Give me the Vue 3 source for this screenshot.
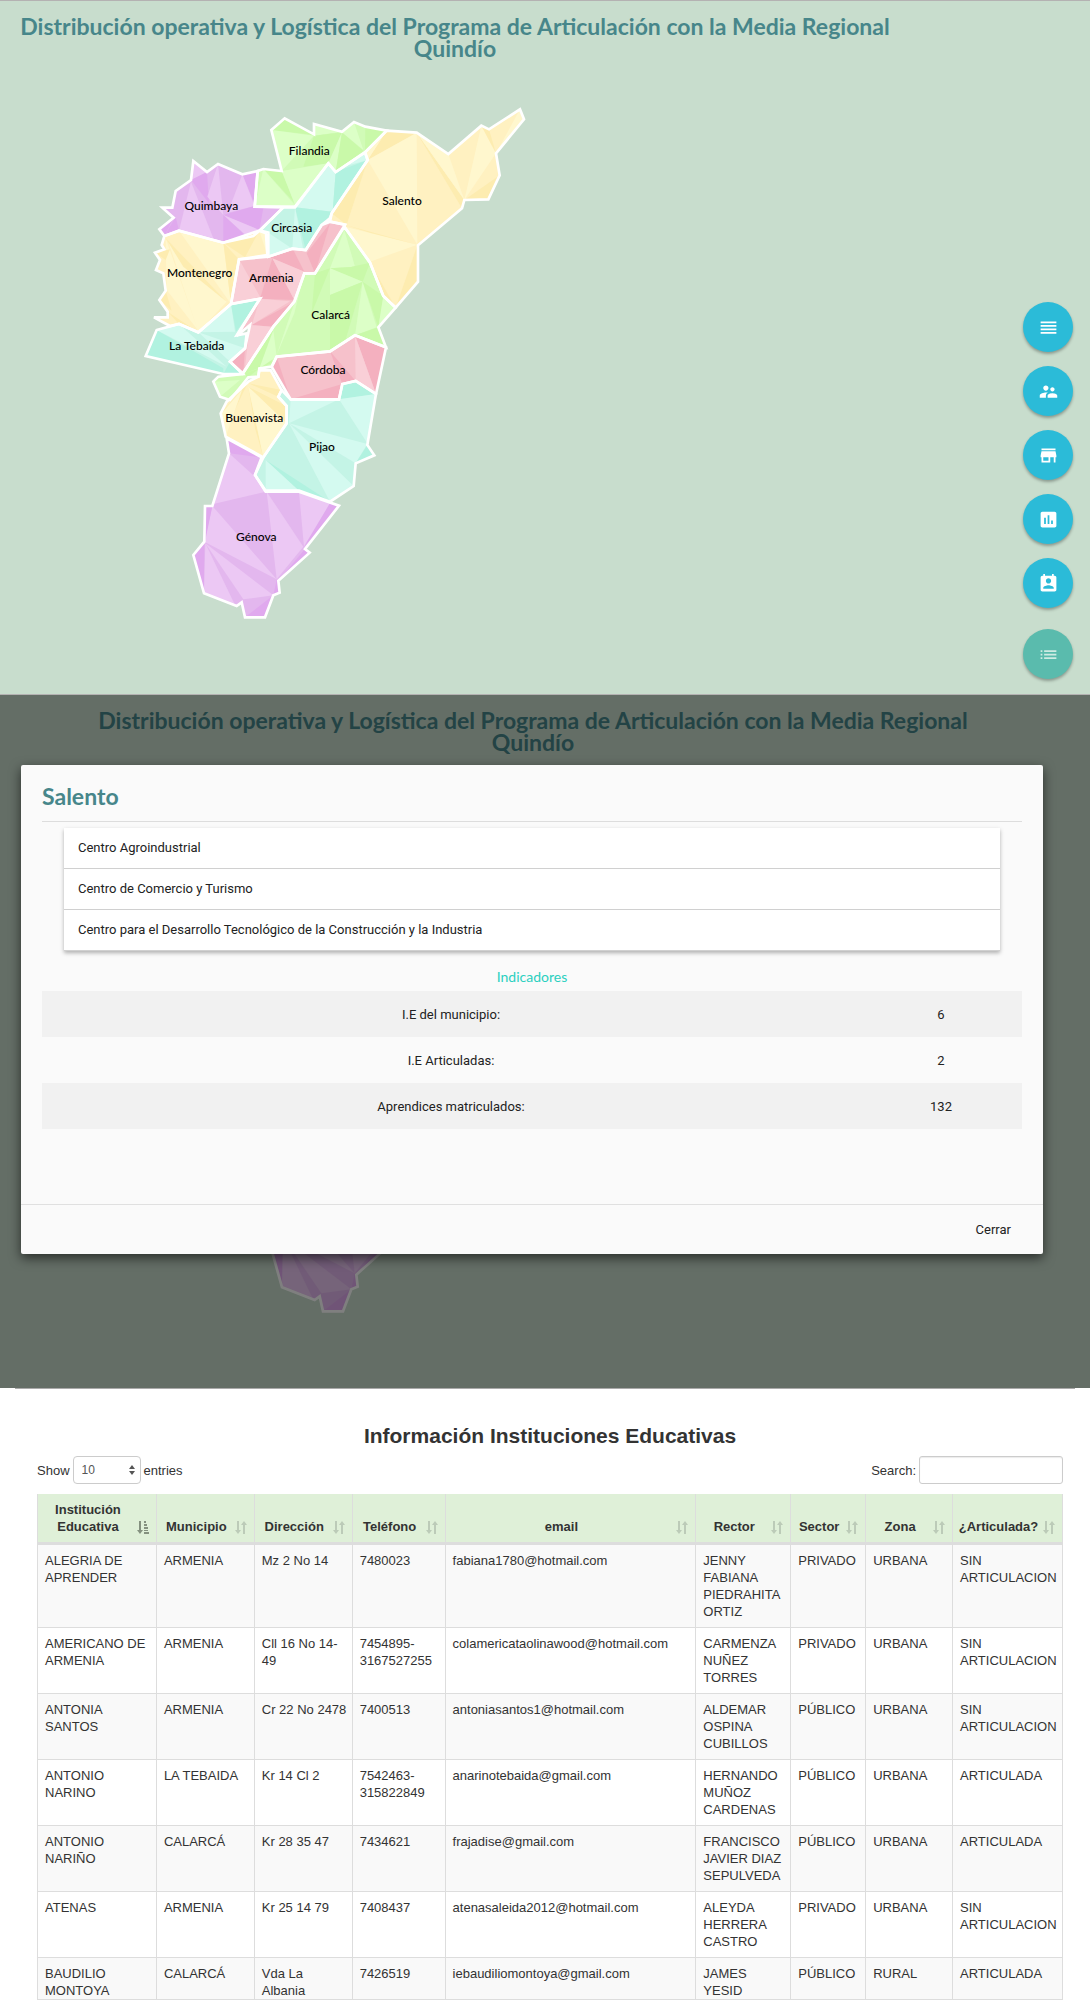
<script setup>
import { ref } from 'vue'

const title = 'Distribución operativa y Logística del Programa de Articulación con la Media Regional Quindío'

// Each municipality: outline, label anchor and shaded facets (l = light, d = dark, m = middle tone).
const regions = [
  {
    name: 'Quimbaya', tone: 'purple', x: 244, y: 330,
    outline: '190,183 231,216 264,192 337,223 383,213 374,320 460,322 388,392 370,408 280,428 147,392 103,408 88,388 131,353 97,323 127,323 137,273 183,240',
    facets: [
      ['l', '190,183 231,216 183,240'], ['d', '183,240 231,216 237,310'], ['l', '264,192 280,345 232,290'],
      ['l', '183,245 250,415 147,392'], ['d', '337,223 383,213 374,312'], ['l', '337,223 374,318 293,338'],
      ['d', '280,345 374,318 410,325 388,390'], ['l', '280,345 388,390 350,408'], ['d', '280,345 350,410 280,428'],
      ['d', '103,408 137,350 147,392'], ['d', '88,388 131,353 103,408'], ['m', '460,322 400,325 388,390'],
    ],
  },
  {
    name: 'Filandia', tone: 'green', x: 538, y: 165,
    outline: '424,90 464,55 552,103 552,72 636,95 672,66 706,80 770,92 705,157 617,216 595,190 495,320 374,320 383,213 400,207 455,213',
    facets: [
      ['d', '424,90 464,55 552,105'], ['l', '424,90 552,107 455,213'], ['l', '552,72 636,95 552,107'],
      ['d', '552,107 636,97 595,190 520,200'], ['l', '636,97 617,216 595,190'], ['d', '636,97 700,152 617,216'],
      ['l', '672,66 700,150 636,97'], ['d', '706,80 770,92 705,157'], ['d', '400,207 455,213 495,310'],
      ['l', '400,207 495,315 374,320'], ['l', '455,213 595,190 495,315'],
    ],
  },
  {
    name: 'Circasia', tone: 'teal', x: 485, y: 397,
    outline: '595,190 617,216 705,157 713,180 605,340 600,355 575,375 527,450 487,446 415,470 415,398 390,392 460,322 495,322',
    facets: [
      ['l', '595,190 617,216 608,335 495,322'], ['d', '617,216 713,180 608,335'], ['l', '705,157 713,180 640,200'],
      ['d', '495,322 605,335 560,410'], ['l', '415,398 487,446 415,470'], ['d', '495,322 560,400 527,450'], ['l', '495,322 520,450 487,446'],
    ],
  },
  {
    name: 'Salento', tone: 'yellow', x: 816, y: 315,
    outline: '770,92 860,98 955,162 1054,77 1077,88 1170,28 1182,58 1098,160 1109,226 1075,298 1003,300 996,325 864,436 864,545 797,623 760,588 720,488 643,380 645,374 600,365 605,340 713,180 705,157',
    facets: [
      ['d', '770,92 860,98 713,180'], ['l', '860,98 862,434 713,180'], ['d', '713,180 650,374 605,340'],
      ['l', '770,92 713,180 705,157'], ['l', '645,380 862,434 720,485'], ['d', '645,374 862,434 720,398'],
      ['d', '860,98 1003,300 996,325'], ['l', '860,98 955,162 1003,300'], ['l', '1054,77 1098,160 1003,300'],
      ['d', '1054,77 1077,88 1098,160'], ['d', '1109,226 1075,298 1003,300'], ['l', '1170,28 1182,58 1098,160'],
      ['d', '862,436 864,545 797,623'], ['d', '720,488 797,623 760,588'],
    ],
  },
  {
    name: 'Montenegro', tone: 'yellow', x: 209, y: 532,
    outline: '147,392 280,428 388,392 408,400 412,465 327,478 303,612 205,697 147,672 120,678 72,652 113,652 113,635 88,600 107,572 100,520 78,510 90,480 75,458 103,448 95,435 103,408',
    facets: [
      ['l', '147,392 280,428 303,612'], ['d', '280,428 327,478 303,612'], ['d', '280,428 388,392 345,472'],
      ['l', '107,415 205,692 110,570'], ['l', '115,425 290,605 205,697'], ['d', '107,415 160,500 290,605'],
      ['d', '107,572 125,632 88,600'], ['d', '113,635 205,697 147,672'], ['d', '75,458 120,448 107,480'], ['l', '388,392 408,400 412,465'],
    ],
  },
  {
    name: 'La Tebaida', tone: 'teal', x: 200, y: 750,
    outline: '80,690 147,672 205,697 303,612 390,596 320,706 350,700 345,745 300,785 338,822 280,822 47,768',
    facets: [
      ['d', '80,690 280,805 280,822 47,768'], ['l', '80,690 147,672 290,800'], ['l', '205,697 303,612 315,695'],
      ['d', '303,612 390,596 318,695'], ['l', '205,697 345,745 300,785'], ['d', '300,785 338,822 280,822'],
    ],
  },
  {
    name: 'Calarcá', tone: 'green', x: 602, y: 657,
    outline: '643,380 720,488 760,588 797,623 745,682 768,742 675,706 600,754 440,770 425,800 388,805 385,830 355,832 300,900 270,890 250,845 265,830 338,822 430,680 493,605 523,520 555,520',
    facets: [
      ['l', '643,390 675,500 600,505'], ['d', '600,505 675,500 698,545'], ['d', '555,520 600,505 545,640'],
      ['l', '600,505 698,545 600,585'], ['d', '600,585 698,545 645,725 600,754'], ['l', '698,545 740,682 675,706'],
      ['d', '698,545 760,588 745,682'], ['l', '760,588 797,623 745,682'], ['d', '745,682 768,742 675,706'],
      ['d', '665,500 720,488 698,545'], ['l', '523,520 493,640 440,765'], ['d', '430,690 425,790 338,822'],
      ['l', '430,690 440,770 388,805'], ['l', '250,845 330,840 270,890'], ['d', '338,822 388,805 355,832'],
    ],
  },
  {
    name: 'Armenia', tone: 'red', x: 424, y: 546,
    outline: '600,365 645,374 555,520 523,520 493,605 430,680 338,820 300,785 345,745 360,675 320,708 390,596 303,612 327,478 415,470 487,446 527,450 575,375',
    facets: [
      ['d', '600,370 530,460 555,520'], ['d', '415,470 490,450 523,515'], ['d', '427,475 493,600 390,596'],
      ['l', '427,475 523,515 493,600'], ['l', '327,478 390,590 303,612'], ['d', '493,605 365,675 430,680'],
      ['l', '390,596 480,604 365,675'], ['l', '360,675 425,680 345,800'], ['d', '345,745 340,820 300,785'], ['d', '345,680 360,675 320,708'],
    ],
  },
  {
    name: 'Córdoba', tone: 'red', x: 579, y: 821,
    outline: '440,770 600,754 675,706 768,742 738,882 677,843 637,852 627,898 482,898 425,800',
    facets: [
      ['d', '440,770 482,898 425,800'], ['d', '482,898 637,852 627,898'], ['d', '600,754 677,843 637,852'],
      ['d', '675,706 768,742 738,882'], ['l', '675,706 738,882 677,843'],
    ],
  },
  {
    name: 'Buenavista', tone: 'yellow', x: 373, y: 967,
    outline: '388,811 422,811 455,870 445,890 470,918 470,970 400,1072 287,1010 272,940 290,905 355,845 385,830',
    facets: [
      ['d', '337,868 355,845 300,960 272,940'], ['d', '355,860 400,1072 375,985'], ['l', '355,860 470,918 470,970 400,1072'],
      ['d', '355,850 455,870 445,890'], ['l', '337,868 287,1010 275,940'], ['d', '355,860 470,970 470,918'],
    ],
  },
  {
    name: 'Pijao', tone: 'teal', x: 576, y: 1053,
    outline: '627,898 637,852 677,843 738,882 712,1035 733,1066 677,1090 671,1158 600,1205 507,1172 407,1172 375,1125 400,1072 470,970 470,918 445,890 455,870 482,898',
    facets: [
      ['l', '482,900 627,898 477,970'], ['d', '637,852 677,843 738,882 627,898'], ['l', '627,898 738,882 712,1030'],
      ['l', '477,970 712,1032 677,1090'], ['l', '477,970 671,1158 600,1205'], ['d', '407,1080 600,1205 507,1172'],
      ['l', '407,1080 507,1172 407,1172'], ['d', '712,1035 733,1066 677,1090'],
    ],
  },
  {
    name: 'Génova', tone: 'purple', x: 379, y: 1324,
    outline: '290,1015 395,1072 375,1125 407,1175 507,1175 627,1217 525,1347 539,1358 445,1442 449,1478 430,1486 405,1552 345,1552 335,1507 320,1518 222,1480 190,1365 223,1325 225,1218 247,1218 297,1060',
    facets: [
      ['d', '290,1015 395,1072 297,1060'], ['l', '297,1060 375,1130 407,1175 250,1212'], ['l', '247,1218 440,1438 223,1325'],
      ['l', '410,1175 520,1340 440,1438'], ['l', '507,1175 600,1210 522,1340'], ['d', '600,1210 627,1217 522,1340'],
      ['d', '225,1218 247,1218 225,1325'], ['d', '223,1330 222,1480 190,1365'], ['l', '226,1330 315,1515 222,1480'],
      ['l', '226,1330 430,1486 340,1498'], ['d', '440,1440 449,1478 430,1486'], ['d', '525,1347 539,1358 445,1442'],
      ['d', '430,1486 405,1552 345,1552'],
    ],
  },
]

const actions = [
  { label: 'Listado', d: 'M3 15h18v-2H3v2zm0 4h18v-2H3v2zm0-8h18V9H3v2zm0-6v2h18V5H3z' },
  { label: 'Usuarios', d: 'M16.5 12c1.38 0 2.49-1.12 2.49-2.5S17.88 7 16.5 7C15.12 7 14 8.12 14 9.5s1.12 2.5 2.5 2.5zM9 11c1.66 0 2.99-1.34 2.99-3S10.66 5 9 5C7.34 5 6 6.34 6 8s1.34 3 3 3zm7.5 3c-1.83 0-5.5.92-5.5 2.75V19h11v-2.25c0-1.83-3.67-2.75-5.5-2.75zM9 13c-2.33 0-7 1.17-7 3.5V19h7v-2.25c0-.85.33-2.34 2.37-3.47C10.5 13.1 9.66 13 9 13z' },
  { label: 'Centros', d: 'M20 4H4v2h16V4zm1 10v-2l-1-5H4l-1 5v2h1v6h10v-6h4v6h2v-6h1zm-9 4H6v-4h6v4z' },
  { label: 'Indicadores', d: 'M19 3H5c-1.1 0-2 .9-2 2v14c0 1.1.9 2 2 2h14c1.1 0 2-.9 2-2V5c0-1.1-.9-2-2-2zM9 17H7v-7h2v7zm4 0h-2V7h2v10zm4 0h-2v-4h2v4z' },
  { label: 'Contactos', d: 'M19 3h-1V1h-2v2H8V1H6v2H5c-1.11 0-2 .9-2 2v14c0 1.1.89 2 2 2h14c1.1 0 2-.9 2-2V5c0-1.1-.9-2-2-2zm-7 3c1.66 0 3 1.34 3 3s-1.34 3-3 3-3-1.34-3-3 1.34-3 3-3zm6 12H6v-1c0-2 4-3.1 6-3.1s6 1.1 6 3.1v1z' },
  { label: 'Menú', d: 'M3 13h2v-2H3v2zm0 4h2v-2H3v2zm0-8h2V7H3v2zm4 4h14v-2H7v2zm0 4h14v-2H7v2zM7 7v2h14V7H7z' },
]

const centers = [
  'Centro Agroindustrial',
  'Centro de Comercio y Turismo',
  'Centro para el Desarrollo Tecnológico de la Construcción y la Industria',
]

const indicators = [
  ['I.E del municipio:', 6],
  ['I.E Articuladas:', 2],
  ['Aprendices matriculados:', 132],
]

const columns = [
  ['Institución Educativa', 119], ['Municipio', 98], ['Dirección', 98], ['Teléfono', 93], ['email', 251],
  ['Rector', 95], ['Sector', 75], ['Zona', 87], ['¿Articulada?', 110],
]

const rows = [
  ['ALEGRIA DE APRENDER', 'ARMENIA', 'Mz 2 No 14', '7480023', 'fabiana1780@hotmail.com', 'JENNY FABIANA PIEDRAHITA ORTIZ', 'PRIVADO', 'URBANA', 'SIN ARTICULACION'],
  ['AMERICANO DE ARMENIA', 'ARMENIA', 'Cll 16 No 14-49', '7454895-3167527255', 'colamericataolinawood@hotmail.com', 'CARMENZA NUÑEZ TORRES', 'PRIVADO', 'URBANA', 'SIN ARTICULACION'],
  ['ANTONIA SANTOS', 'ARMENIA', 'Cr 22 No 2478', '7400513', 'antoniasantos1@hotmail.com', 'ALDEMAR OSPINA CUBILLOS', 'PÚBLICO', 'URBANA', 'SIN ARTICULACION'],
  ['ANTONIO NARINO', 'LA TEBAIDA', 'Kr 14 Cl 2', '7542463-315822849', 'anarinotebaida@gmail.com', 'HERNANDO MUÑOZ CARDENAS', 'PÚBLICO', 'URBANA', 'ARTICULADA'],
  ['ANTONIO NARIÑO', 'CALARCÁ', 'Kr 28 35 47', '7434621', 'frajadise@gmail.com', 'FRANCISCO JAVIER DIAZ SEPULVEDA', 'PÚBLICO', 'URBANA', 'ARTICULADA'],
  ['ATENAS', 'ARMENIA', 'Kr 25 14 79', '7408437', 'atenasaleida2012@hotmail.com', 'ALEYDA HERRERA CASTRO', 'PRIVADO', 'URBANA', 'SIN ARTICULACION'],
  ['BAUDILIO MONTOYA', 'CALARCÁ', 'Vda La Albania', '7426519', 'iebaudiliomontoya@gmail.com', 'JAMES YESID', 'PÚBLICO', 'RURAL', 'ARTICULADA'],
]

const pageSize = ref('10')
const query = ref('')
</script>

<template>
  <main class="page">
    <section class="panel with-actions">
      <div class="stage">
        <h1 class="title">{{ title }}</h1>
        <svg class="map" viewBox="0 0 1950 1590" role="img" aria-label="Mapa del Quindío">
          <g id="quindio">
            <g v-for="r in regions" :key="r.name" :class="r.tone">
              <polygon class="m" :points="r.outline" />
              <polygon v-for="(f, i) in r.facets" :key="i" :class="f[0]" :points="f[1]" />
            </g>
            <polygon v-for="r in regions" :key="r.name" class="border" :points="r.outline" />
            <text v-for="r in regions" :key="r.name" class="place" :x="r.x" :y="r.y">{{ r.name }}</text>
          </g>
        </svg>
      </div>
      <nav class="actions" aria-label="Acciones">
        <button v-for="a in actions" :key="a.label" type="button" class="fab" :aria-label="a.label">
          <svg viewBox="0 0 24 24" aria-hidden="true"><path :d="a.d" /></svg>
        </button>
      </nav>
    </section>

    <section class="panel dimmed">
      <div class="stage">
        <h2 class="title">{{ title }}</h2>
        <svg class="map" viewBox="0 0 1950 1590" aria-hidden="true"><use href="#quindio" /></svg>
      </div>
      <div class="backdrop">
        <div class="modal" role="dialog" aria-labelledby="modal-title">
          <div class="modal-body">
            <h3 id="modal-title" class="modal-title">Salento</h3>
            <ul class="centers">
              <li v-for="c in centers" :key="c">{{ c }}</li>
            </ul>
            <table class="indicators">
              <caption>Indicadores</caption>
              <tbody>
                <tr v-for="i in indicators" :key="i[0]">
                  <th scope="row">{{ i[0] }}</th>
                  <td>{{ i[1] }}</td>
                </tr>
              </tbody>
            </table>
          </div>
          <footer class="modal-footer">
            <button type="button" class="close">Cerrar</button>
          </footer>
        </div>
      </div>
    </section>

    <section class="listing">
      <h2 class="listing-title">Información Instituciones Educativas</h2>
      <div class="tools">
        <label class="tool">Show
          <span class="select-box">
            <select v-model="pageSize">
              <option>10</option>
              <option>25</option>
              <option>50</option>
            </select>
            <svg viewBox="0 0 6 10" aria-hidden="true"><path d="M0 4L3 0l3 4zM0 6h6l-3 4z" /></svg>
          </span>
          entries
        </label>
        <label class="tool">Search: <input v-model="query" class="search" type="search" /></label>
      </div>
      <table class="schools">
        <colgroup>
          <col v-for="c in columns" :key="c[0]" :style="{ width: (c[1] / 1026) * 100 + '%' }" />
        </colgroup>
        <thead>
          <tr>
            <th v-for="(c, i) in columns" :key="c[0]" scope="col">
              <span class="head">
                <span class="head-text">{{ c[0] }}</span>
                <svg class="sort" :class="{ active: i === 0 }" viewBox="0 0 12 13" aria-hidden="true">
                  <path v-if="i === 0" d="M2 0h2v9h2l-3 4-3-4h2zM7 0h2v2H7zM7 3h3v2H7zM7 6h4v2H7zM7 9h4v1H7zM7 11h5v2H7z" />
                  <path v-else d="M2 0h2v9h2l-3 4-3-4h2zM8 13h2V4h2L9 0 6 4h2z" />
                </svg>
              </span>
            </th>
          </tr>
        </thead>
        <tbody>
          <tr v-for="r in rows" :key="r[0]">
            <td v-for="(cell, i) in r" :key="i">{{ cell }}</td>
          </tr>
        </tbody>
      </table>
    </section>
  </main>
</template>

<style>
body {
  margin: 0;
  background: #fff;
}
</style>

<style scoped>
.page {
  font-family: Roboto, sans-serif;
  font-size: 13px;
  color: #222;
}

.panel {
  position: relative;
  background: #c8ddcd;
  border-top: 1px solid #b4b2b2;
}

.with-actions {
  display: grid;
  grid-template-columns: 1fr 180px;
}

.stage {
  padding: 14px 20px 64px;
  text-align: center;
}

.dimmed .stage {
  padding-right: 44px;
}

.title {
  max-width: 880px;
  margin: 0 auto 41px;
  font: 700 23px/22px Lato, sans-serif;
  color: #47868a;
}

.map {
  display: block;
  width: 650px;
  max-width: 100%;
  margin: 0 auto;
}

.border {
  fill: none;
  stroke: #fff;
  stroke-width: 8;
}

.place {
  font: 500 36px Lato, sans-serif;
  fill: #000;
  text-anchor: middle;
}

.yellow .m { fill: #fff1c1; }
.yellow .l { fill: #fff7ce; }
.yellow .d { fill: #fdecb0; }
.green .m { fill: #d1fbb7; }
.green .l { fill: #dcffc7; }
.green .d { fill: #c9f9a9; }
.purple .m { fill: #e3b7ee; }
.purple .l { fill: #ecc8f4; }
.purple .d { fill: #e0a9ee; }
.red .m { fill: #f6c1cb; }
.red .l { fill: #f9cfd7; }
.red .d { fill: #f4b0bf; }
.teal .m { fill: #c4f4e6; }
.teal .l { fill: #d4faf0; }
.teal .d { fill: #b1f2e0; }

.actions {
  display: flex;
  flex-direction: column;
  align-items: flex-end;
  justify-content: flex-end;
  gap: 14px;
  padding: 0 17px 15px 0;
}

.fab {
  display: grid;
  place-items: center;
  width: 50px;
  height: 50px;
  padding: 0;
  border: 0;
  border-radius: 50%;
  background: #2bbbd8;
  box-shadow: 0 2px 3px rgba(0, 0, 0, 0.3);
}

.fab:last-child {
  margin-top: 7px;
  background: #5abbad;
}

.fab svg {
  width: 21px;
  height: 21px;
  fill: #fff;
}

.fab:last-child svg {
  fill: #cfebe3;
}

.backdrop {
  position: absolute;
  inset: 0;
  padding: 70px 47px 0 21px;
  background: rgba(0, 0, 0, 0.5);
}

.modal {
  background: #fafafa;
  border-radius: 2px;
  box-shadow: 0 4px 12px rgba(0, 0, 0, 0.6);
}

.modal-body {
  padding: 20px 21px 75px;
}

.modal-title {
  margin: 0;
  padding-bottom: 14px;
  border-bottom: 1px solid #ddd;
  font: 700 23px/22px Lato, sans-serif;
  color: #47868a;
}

.centers {
  margin: 6px 22px 16px;
  padding: 0;
  list-style: none;
  background: #fff;
  box-shadow: 0 2px 4px rgba(0, 0, 0, 0.3);
}

.centers li {
  padding: 0 14px;
  border-bottom: 1px solid #d0d0d0;
  line-height: 40px;
}

.indicators {
  width: 100%;
  border-collapse: collapse;
  text-align: center;
}

.indicators caption {
  padding-bottom: 4px;
  font: 400 14px/20px Lato, sans-serif;
  color: #2bd0c0;
}

.indicators th,
.indicators td {
  height: 46px;
  padding: 0;
  font-weight: 400;
}

.indicators td {
  width: 162px;
}

.indicators tr:nth-child(odd) {
  background: #f1f1f1;
}

.modal-footer {
  display: flex;
  justify-content: flex-end;
  padding: 10px 16px 9px;
  border-top: 1px solid #e0e0e0;
}

.close {
  padding: 0 16px;
  border: 0;
  background: none;
  font: 400 13px/30px Roboto, sans-serif;
  color: #222;
}

.listing {
  margin: 0 15px;
  padding: 34px 12px 0 22px;
  border-top: 1px solid #aaa;
  font: 13px/17px "Liberation Sans", Arial, sans-serif;
  color: #333;
}

.listing-title {
  margin: 0 0 7px;
  font-size: 21px;
  font-weight: 700;
  line-height: 26px;
  text-align: center;
}

.tools {
  display: flex;
  justify-content: space-between;
  margin-bottom: 10px;
}

.tool {
  display: flex;
  align-items: center;
  gap: 3px;
}

.select-box {
  display: inline-flex;
  align-items: center;
  box-sizing: border-box;
  width: 68px;
  height: 28px;
  padding: 0 5px 0 8px;
  border: 1px solid #ccc;
  border-radius: 4px;
}

.select-box select {
  flex: 1;
  min-width: 0;
  padding: 0;
  border: 0;
  appearance: none;
  background: none;
  font: 12px/17px "Liberation Sans", Arial, sans-serif;
  color: #555;
}

.select-box svg {
  width: 6px;
  height: 10px;
  fill: #555;
}

.search {
  box-sizing: border-box;
  width: 144px;
  height: 28px;
  border: 1px solid #ccc;
  border-radius: 3px;
  box-shadow: inset 0 1px 1px rgba(0, 0, 0, 0.08);
}

.schools {
  width: 100%;
  table-layout: fixed;
  border-collapse: separate;
  border-spacing: 0;
  border-left: 1px solid #ddd;
}

.schools th,
.schools td {
  border-right: 1px solid #ddd;
}

.schools th {
  padding: 7px 7px 7px 5px;
  border-bottom: 3px solid #ddd;
  background: #dff0d8;
  vertical-align: bottom;
}

.head {
  display: flex;
  align-items: flex-end;
  gap: 4px;
}

.head-text {
  flex: 1;
  min-width: 0;
}

.sort {
  flex: none;
  width: 12px;
  height: 13px;
  margin-bottom: 1px;
  fill: #bccbb8;
}

.sort.active {
  fill: #84917f;
}

.schools td {
  padding: 7px 4px 7px 7px;
  border-bottom: 1px solid #ddd;
  vertical-align: top;
}

.schools tbody tr:nth-child(odd) {
  background: #f9f9f9;
}

.schools tr:last-child td {
  padding-bottom: 0;
}
</style>
